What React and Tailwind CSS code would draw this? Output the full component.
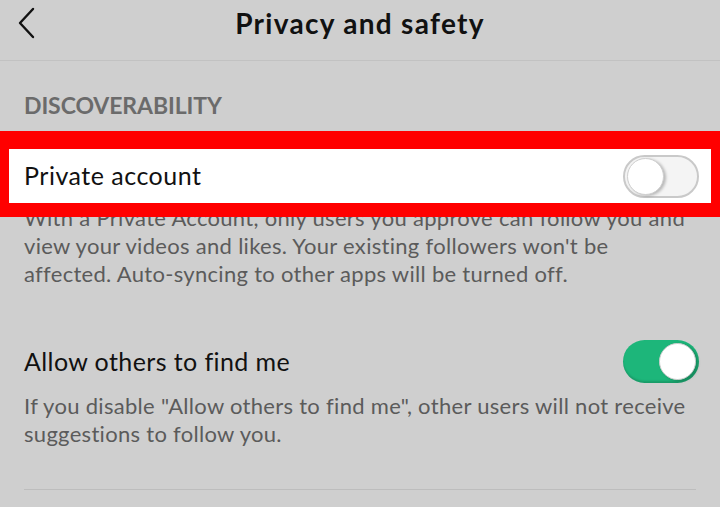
function Toggle({ on }) {
  return (
    <div
      className={
        on
          ? 'w-[76px] h-[43px] rounded-full bg-[#1db67a] flex justify-end items-center p-[3px] shadow-[inset_0_-2px_2px_rgba(0,0,0,0.15)]'
          : 'w-[76px] h-[43px] rounded-full bg-[#f4f4f4] border-2 border-[#c9c9c9] flex items-center p-[2px]'
      }
    >
      <div className="w-[37px] h-[37px] rounded-full bg-white border border-[#cfcfcf] shadow-[2px_1px_3px_rgba(0,0,0,0.25)]" />
    </div>
  )
}

export default function App() {
  return (
    <div className="w-[720px] h-[507px] overflow-hidden bg-[#cfcfcf] font-['Lato',sans-serif]">
      <div className="h-[61px] relative border-b border-[#c2c2c2]">
        <div className="h-[45px] flex items-center">
          <svg className="ml-[18px]" width="18" height="32" viewBox="0 0 18 32" fill="none">
            <polyline points="15,2 2,16 15,30" stroke="#111" strokeWidth="2.4" strokeLinecap="round" strokeLinejoin="round" />
          </svg>
          <h1 className="absolute left-0 right-0 top-0 h-[45px] flex items-center justify-center text-[28px] font-bold text-[#111] tracking-[1.3px]">
            Privacy and safety
          </h1>
        </div>
      </div>

      <div className="px-6 pt-[33px] pb-[14px] text-[23px] font-bold text-[#6b6b6b] leading-none tracking-[-0.1px]">
        DISCOVERABILITY
      </div>

      <div className="relative z-10 border-[#ff0000] border-t-[18px] border-b-[14px] border-x-[9px] bg-white h-[86px] flex items-center justify-between pl-[15px] pr-[12px]">
        <span className="text-[25px] text-[#111] tracking-[0.5px]">Private account</span>
        <Toggle on={false} />
      </div>

      <p className="-mt-[13px] px-6 text-[22px] leading-[28px] text-[#5b5b5b] tracking-[0.3px]">
        With a Private Account, only users you approve can follow you and view your videos and likes. Your existing followers won't be affected. Auto-syncing to other apps will be turned off.
      </p>

      <div className="mt-[52px] pl-6 pr-[21px] flex items-center justify-between">
        <span className="text-[25px] text-[#111] tracking-[0.4px]">Allow others to find me</span>
        <Toggle on />
      </div>

      <p className="mt-[9px] px-6 text-[22px] leading-[28px] text-[#5b5b5b] tracking-[0.3px]">
        If you disable "Allow others to find me", other users will not receive suggestions to follow you.
      </p>

      <div className="mx-6 mt-[41px] border-t border-[#bdbdbd]" />
    </div>
  )
}
